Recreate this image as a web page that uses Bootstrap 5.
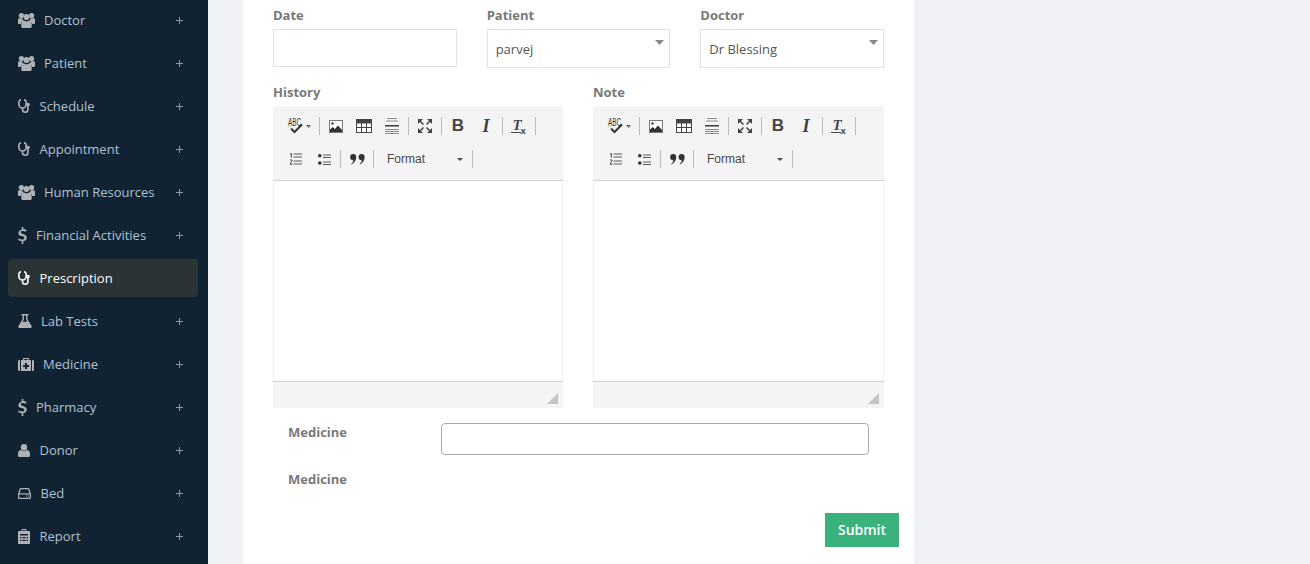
<!DOCTYPE html>
<html lang="en">
<head>
<meta charset="utf-8">
<title>Prescription</title>
<link rel="stylesheet" href="https://cdn.jsdelivr.net/npm/bootstrap@5.3.0/dist/css/bootstrap.min.css">
<style>
html,body{height:564px;overflow:hidden}
body{background:#f1f2f7;font-family:"Open Sans",sans-serif;font-size:13px;color:#797979}
.shell{height:564px}
.side{width:208px;flex:none;background:#112233;padding:1px 10px 0 8px}
.side-link{height:38px;margin-bottom:5px;padding:2px 15px 0 10px;color:#aec3d2;font-size:13px;border-radius:4px;display:flex;align-items:center}
.side-link svg.ico{fill:#aeb2b7;color:#aeb2b7;flex:none;margin-right:9px;margin-bottom:2px}
.side-link svg.gap-w{margin-right:9.5px}
.side-link .plus{margin-left:auto;width:7px;height:7px;flex:none;stroke:#8d99a3;fill:none;margin-bottom:2px}
.side-link.on{background:#2a3435;color:#fff}
.side-link.on svg.ico{fill:#fff;color:#fff}
.panel{width:671px;margin-left:35px;background:#fff;padding:6px 30px 0;height:564px}
.frow{--bs-gutter-x:30px;--bs-gutter-y:0}
.col-left{flex:0 0 320px;width:320px}
.col-right{flex:0 0 321px;width:321px}
.flabel{display:block;font-weight:700;line-height:18px;margin:0 0 5px;color:#797979}
.date-in{height:38px;border:1px solid #e2e2e4;border-radius:0;box-shadow:none}
.sel-in{height:39px;border:1px solid #e2e2e4;border-radius:0;font-size:13px;color:#555;padding:2px 8px 0;font-family:"Open Sans",sans-serif;
background-image:url("data:image/svg+xml,%3Csvg xmlns='http://www.w3.org/2000/svg' width='9' height='5'%3E%3Cpath fill='%23888' d='M0 0h9L4.500 5z'/%3E%3C/svg%3E");background-position:right 5px top 10px;background-size:9px 5px}
.mb-sel{margin-bottom:15px}
.ed{height:302px;background:#fff;display:flex;flex-direction:column}
.ed-bar{height:75px;background:#f4f4f4;padding:4px 0 0 9px;border-bottom:1px solid #d1d1d1}
.ed-line{height:32px;margin-bottom:1px;display:flex;align-items:center}
.tb{width:28px;height:24px;display:flex;align-items:center;justify-content:center;flex:none}
.tb svg{display:block}
.tb-spell{width:35px}
.tb-sep{width:1px;height:18px;background:#bcbcbc;margin:0 2px;flex:none}
.tb-b,.tb-i{color:#444}
.tb-b{font:700 17px "Liberation Sans",sans-serif}
.tb-i{font:italic 700 18px "Liberation Serif",serif}
.tb-fmt{width:94px;display:flex;align-items:center;font:12px "Liberation Sans",sans-serif;color:#484848;padding:0 6px 0 11px;flex:none}
.tb-fmt i{margin-left:auto;margin-right:1px;border:3px solid transparent;border-top-color:#484848;border-bottom:0}
.ed-body{height:200px;border-left:1px solid #f0f0f0;border-right:1px solid #f0f0f0;background:#fff}
.ed-foot{height:27px;background:#f4f4f4;border-top:1px solid #d1d1d1;display:flex;justify-content:flex-end;align-items:flex-end;padding:0 5px 4px 0}
.medi{padding:15px 15px 0}
.medi-top{height:47px}
.medi-lab{width:153px;flex:none;font-weight:700;line-height:18px;margin:0;color:#797979}
.medi-in{height:32px;border:1px solid #aaa;border-radius:4px;box-shadow:none}
.sub-wrap{padding:25px 0 0;margin-right:-15px}
.sub-btn{width:74px;height:34px;padding:0 0 2px;background:#39b37b;border:0;border-radius:0;font-weight:600;font-size:14px;color:#fff}
</style>
</head>
<body>
<svg width="0" height="0" class="position-absolute">
<defs>
<symbol id="i-users" viewBox="0 0 17 15"><circle cx="3.400" cy="2.600" r="2.600"/><circle cx="13.600" cy="2.600" r="2.600"/><circle cx="8.500" cy="4" r="3"/><path d="M0 6.500c0-.7.500-1.200 1.200-1.200h3c.1 1 .6 1.800 1.300 2.300-1.500.4-2.500 1.800-2.700 3.400H1c-.6 0-1-.4-1-1zM17 6.500c0-.7-.5-1.200-1.200-1.200h-3c-.1 1-.6 1.800-1.300 2.300 1.500.4 2.500 1.800 2.700 3.400H16c.6 0 1-.4 1-1zM6 7.600c.7.500 1.600.8 2.500.8s1.800-.3 2.500-.8c1.700.2 2.700 1.500 2.700 3.300v2.500c0 1-.7 1.600-1.600 1.600H4.900c-.9 0-1.600-.6-1.600-1.600v-2.500c0-1.800 1-3.100 2.700-3.300z"/></symbol>
<symbol id="i-steth" viewBox="0 0 12 14"><path fill="none" stroke="currentColor" stroke-width="1.600" d="M3 .9C1.700.9.900 1.700.9 3v2.500a3.600 3.600 0 0 0 7.200 0V3C8.100 1.700 7.300.9 6 .9M4.500 9.100v1.400a2.600 2.600 0 0 0 5.400 0V7"/><circle cx="10" cy="5.500" r="1.800"/></symbol>
<symbol id="i-flask" viewBox="0 0 14 14"><path fill-rule="evenodd" d="M3.500 0h7v1.400H9.400v3.800l4.200 6.900c.5.900 0 1.900-1 1.900H1.400c-1 0-1.500-1-1-1.900l4.200-6.900V1.400H3.500zM6 1.400v4.200L4.700 7.800h4.600L8 5.600V1.400z"/></symbol>
<symbol id="i-med" viewBox="0 0 16 13"><path fill-rule="evenodd" d="M5 2V1c0-.6.4-1 1-1h4c.6 0 1 .4 1 1v1h2v11H3V2zm1.200 0h3.600V1.100H6.200zM7 5v2H5v2h2v2h2V9h2V7H9V5zM0 3.500C0 2.700.6 2 1.400 2H2v11h-.6C.6 13 0 12.300 0 11.500zM14 2h.6c.8 0 1.400.7 1.400 1.500v8c0 .8-.6 1.500-1.400 1.500H14z"/></symbol>
<symbol id="i-user" viewBox="0 0 12 13"><circle cx="6" cy="3.200" r="3.200"/><path d="M3 6c.8.700 1.800 1.100 3 1.100S8.200 6.700 9 6c2 .1 3 1.700 3 4v1.400c0 1-.7 1.600-1.600 1.600H1.600C.7 13 0 12.400 0 11.400V10c0-2.300 1-3.900 3-4z"/></symbol>
<symbol id="i-hdd" viewBox="0 0 13 11"><path fill-rule="evenodd" d="M2.800 0h7.400c.6 0 1 .3 1.200.8L13 6v3.700c0 .7-.6 1.300-1.300 1.300H1.300C.6 11 0 10.400 0 9.700V6L1.600.8C1.800.3 2.200 0 2.800 0zm0 1.200L1.600 5.200h9.800L10.200 1.200zM1.200 6.400v3.400h10.600V6.400zM8 7.600h1.200v1H8zm1.800 0H11v1H9.800z"/></symbol>
<symbol id="i-rep" viewBox="0 0 12 15"><path fill-rule="evenodd" d="M3.500 2V.8C3.500.3 3.900 0 4.300 0h3.400c.4 0 .8.300.8.800V2H11c.6 0 1 .4 1 1v11c0 .6-.4 1-1 1H1c-.6 0-1-.4-1-1V3c0-.6.4-1 1-1zm1 0h3V1h-3zM2 5v1.500h8V5zm0 3v1.300h1.500V8zm2.500 0v1.300h3V8zm4 0v1.300H10V8zM2 10.700V12h1.500v-1.300zm2.500 0V12h3v-1.300zm4 0V12H10v-1.300z"/></symbol>
<symbol id="i-dollar" viewBox="0 0 9 17"><path d="M3.700 0h1.600v2.100c1.200.1 2.300.4 3.200.9l-.6 1.700c-1-.5-2.100-.8-3.100-.8-1.300 0-2 .5-2 1.300 0 .8.600 1.200 2.400 1.800 2.400.8 3.600 1.800 3.600 3.700 0 1.800-1.200 3.100-3.500 3.400V17H3.700v-2.800c-1.400-.1-2.700-.5-3.700-1.100l.7-1.700c1.100.6 2.400 1 3.500 1 1.400 0 2.200-.6 2.200-1.500 0-.9-.7-1.300-2.300-1.900C1.800 9.200.4 8.300.4 6.300.4 4.500 1.600 3.100 3.700 2.700z"/></symbol>
<symbol id="i-plus" viewBox="0 0 7 7"><path d="M3.500 0v7M0 3.500h7"/></symbol>
<symbol id="t-spell" viewBox="0 0 27 16"><text x="2" y="8" font-family="Liberation Sans" font-size="10" fill="#333" textLength="13" lengthAdjust="spacingAndGlyphs">ABC</text><path fill="none" stroke="#333" stroke-width="2" d="M5 10.500l3.500 3.500L16 6.500"/><path fill="#666" d="M20 7h5l-2.500 3z"/></symbol>
<symbol id="t-img" viewBox="0 0 14 13"><rect x=".5" y=".5" width="13" height="12" fill="#fff" stroke="#777"/><circle cx="3.500" cy="3.500" r="1.300" fill="#444"/><path fill="#333" d="M1 12V9.500l2.500-2.500 2.500 2 3-3.500 4 4.500v2z"/></symbol>
<symbol id="t-tab" viewBox="0 0 16 14"><rect width="16" height="14" fill="#444"/><path fill="#fff" d="M1 4.400h4v3.600H1zM6 4.400h4v3.600H6zM11 4.400h4v3.600h-4zM1 9h4v4H1zM6 9h4v4H6zM11 9h4v4h-4z"/></symbol>
<symbol id="t-hr" viewBox="0 0 14 16"><path fill="#8f8f8f" d="M2 0h10v1H2zM1 2.500h12v1H1zM0 11h14v1H0zM0 13h14v1H0zM0 15h14v1H0z"/><path fill="#3a3a3a" d="M0 7h14v1.500H0z"/></symbol>
<symbol id="t-max" viewBox="0 0 14 14"><path fill="#444" d="M0 0h5L0 5zM14 0v5L9 0zM0 14V9l5 5zM14 14H9l5-5z"/><path fill="none" stroke="#444" stroke-width="1.500" d="M2 2l3.500 3.500M12 2L8.500 5.500M2 12l3.500-3.500M12 12L8.500 8.500"/></symbol>
<symbol id="t-ol" viewBox="0 0 12 12"><path fill="#5a5a5a" d="M3.500 .5H12v1H3.500zM3.500 3.500H12v1H3.500zM3.500 7.500H12v1H3.500zM3.500 10.500H12v1H3.500z"/><path fill="none" stroke="#333" stroke-width="1" d="M.3 .9l1-.5v4M.2 7.200c.3-.7 1.900-.6 1.900.4 0 .9-1.900 1.700-1.900 3.600h2.100"/></symbol>
<symbol id="t-ul" viewBox="0 0 13 11"><circle cx="1.800" cy="1.800" r="1.800" fill="#333"/><circle cx="1.800" cy="9" r="1.800" fill="#333"/><path fill="#5a5a5a" d="M5 .5h8v1H5zM5 3h8v1H5zM5 7.500h8v1H5zM5 10h8v1H5z"/></symbol>
<symbol id="t-quo" viewBox="0 0 15 11"><path fill="#333" d="M3.200 0a3 3 0 0 1 3 3.100c0 3.100-2 6.300-4.600 7.300l-.4-.7c1.200-.8 2-1.900 2.300-3.300A3 3 0 0 1 3.200 0zM11.600 0a3 3 0 0 1 3 3.100c0 3.100-2 6.300-4.600 7.300l-.4-.7c1.200-.8 2-1.900 2.300-3.300A3 3 0 0 1 11.600 0z"/></symbol>
<symbol id="t-clear" viewBox="0 0 16 15"><text x="1.500" y="11" font-family="Liberation Serif" font-style="italic" font-weight="700" font-size="15" fill="#444">T</text><path fill="#444" d="M0 13h10v1H0z"/><text x="9.500" y="14.500" font-family="Liberation Sans" font-weight="700" font-size="9.500" fill="#444">x</text></symbol>
<symbol id="t-rs" viewBox="0 0 11 11"><path fill="#c4c4c4" d="M11 0v11H0z"/></symbol>
</defs>
</svg>
<div class="shell d-flex">
<nav class="side nav flex-column flex-nowrap">
<a class="side-link text-decoration-none"><svg class="ico" width="17" height="15"><use href="#i-users"/></svg>Doctor<svg class="plus"><use href="#i-plus"/></svg></a>
<a class="side-link text-decoration-none"><svg class="ico" width="17" height="15"><use href="#i-users"/></svg>Patient<svg class="plus"><use href="#i-plus"/></svg></a>
<a class="side-link text-decoration-none"><svg class="ico gap-w" width="12" height="14"><use href="#i-steth"/></svg>Schedule<svg class="plus"><use href="#i-plus"/></svg></a>
<a class="side-link text-decoration-none"><svg class="ico gap-w" width="12" height="14"><use href="#i-steth"/></svg>Appointment<svg class="plus"><use href="#i-plus"/></svg></a>
<a class="side-link text-decoration-none"><svg class="ico" width="17" height="15"><use href="#i-users"/></svg>Human Resources<svg class="plus"><use href="#i-plus"/></svg></a>
<a class="side-link text-decoration-none"><svg class="ico" width="9" height="17"><use href="#i-dollar"/></svg>Financial Activities<svg class="plus"><use href="#i-plus"/></svg></a>
<a class="side-link on text-decoration-none"><svg class="ico gap-w" width="12" height="14"><use href="#i-steth"/></svg>Prescription</a>
<a class="side-link text-decoration-none"><svg class="ico" width="14" height="14"><use href="#i-flask"/></svg>Lab Tests<svg class="plus"><use href="#i-plus"/></svg></a>
<a class="side-link text-decoration-none"><svg class="ico" width="16" height="13"><use href="#i-med"/></svg>Medicine<svg class="plus"><use href="#i-plus"/></svg></a>
<a class="side-link text-decoration-none"><svg class="ico" width="9" height="17"><use href="#i-dollar"/></svg>Pharmacy<svg class="plus"><use href="#i-plus"/></svg></a>
<a class="side-link text-decoration-none"><svg class="ico gap-w" width="12" height="13"><use href="#i-user"/></svg>Donor<svg class="plus"><use href="#i-plus"/></svg></a>
<a class="side-link text-decoration-none"><svg class="ico gap-w" width="13" height="11"><use href="#i-hdd"/></svg>Bed<svg class="plus"><use href="#i-plus"/></svg></a>
<a class="side-link text-decoration-none"><svg class="ico gap-w" width="12" height="15"><use href="#i-rep"/></svg>Report<svg class="plus"><use href="#i-plus"/></svg></a>
</nav>
<main class="panel">
<form>
<div class="row frow mb-sel">
<div class="col-4"><label class="flabel">Date</label><input class="form-control date-in" type="text"></div>
<div class="col-4"><label class="flabel">Patient</label><select class="form-select sel-in"><option>parvej</option></select></div>
<div class="col-4"><label class="flabel">Doctor</label><select class="form-select sel-in"><option>Dr Blessing</option></select></div>
</div>
<div class="row frow">
<div class="col-left"><label class="flabel">History</label>
<div class="ed">
<div class="ed-bar">
<div class="ed-line">
<span class="tb tb-spell"><svg width="27" height="16"><use href="#t-spell"/></svg></span><span class="tb-sep"></span>
<span class="tb"><svg width="14" height="13"><use href="#t-img"/></svg></span><span class="tb"><svg width="16" height="14"><use href="#t-tab"/></svg></span><span class="tb"><svg width="14" height="16"><use href="#t-hr"/></svg></span><span class="tb-sep"></span>
<span class="tb"><svg width="14" height="14"><use href="#t-max"/></svg></span><span class="tb-sep"></span>
<span class="tb tb-b">B</span><span class="tb tb-i">I</span><span class="tb-sep"></span>
<span class="tb"><svg width="16" height="15"><use href="#t-clear"/></svg></span><span class="tb-sep"></span>
</div>
<div class="ed-line">
<span class="tb"><svg width="12" height="12"><use href="#t-ol"/></svg></span><span class="tb"><svg width="13" height="11"><use href="#t-ul"/></svg></span><span class="tb-sep"></span>
<span class="tb"><svg width="15" height="11"><use href="#t-quo"/></svg></span><span class="tb-sep"></span>
<span class="tb-fmt">Format<i></i></span><span class="tb-sep"></span>
</div>
</div>
<div class="ed-body"></div>
<div class="ed-foot"><svg width="11" height="11"><use href="#t-rs"/></svg></div>
</div></div>
<div class="col-right"><label class="flabel">Note</label>
<div class="ed">
<div class="ed-bar">
<div class="ed-line">
<span class="tb tb-spell"><svg width="27" height="16"><use href="#t-spell"/></svg></span><span class="tb-sep"></span>
<span class="tb"><svg width="14" height="13"><use href="#t-img"/></svg></span><span class="tb"><svg width="16" height="14"><use href="#t-tab"/></svg></span><span class="tb"><svg width="14" height="16"><use href="#t-hr"/></svg></span><span class="tb-sep"></span>
<span class="tb"><svg width="14" height="14"><use href="#t-max"/></svg></span><span class="tb-sep"></span>
<span class="tb tb-b">B</span><span class="tb tb-i">I</span><span class="tb-sep"></span>
<span class="tb"><svg width="16" height="15"><use href="#t-clear"/></svg></span><span class="tb-sep"></span>
</div>
<div class="ed-line">
<span class="tb"><svg width="12" height="12"><use href="#t-ol"/></svg></span><span class="tb"><svg width="13" height="11"><use href="#t-ul"/></svg></span><span class="tb-sep"></span>
<span class="tb"><svg width="15" height="11"><use href="#t-quo"/></svg></span><span class="tb-sep"></span>
<span class="tb-fmt">Format<i></i></span><span class="tb-sep"></span>
</div>
</div>
<div class="ed-body"></div>
<div class="ed-foot"><svg width="11" height="11"><use href="#t-rs"/></svg></div>
</div></div>
</div>
<div class="medi">
<div class="medi-top d-flex align-items-start"><label class="medi-lab">Medicine</label><input class="form-control medi-in" type="text"></div>
<div class="d-flex"><label class="medi-lab">Medicine</label></div>
</div>
<div class="sub-wrap d-flex justify-content-end"><button type="button" class="btn sub-btn">Submit</button></div>
</form>
</main>
</div>
<script src="https://cdn.jsdelivr.net/npm/bootstrap@5.3.0/dist/js/bootstrap.bundle.min.js"></script>
</body>
</html>
